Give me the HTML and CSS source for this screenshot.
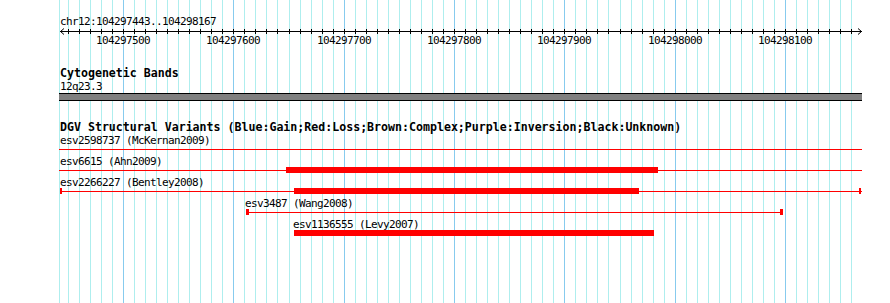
FILE: index.html
```html
<!DOCTYPE html>
<html lang="en">
<head>
    <meta charset="UTF-8">
    <title>chr12:104297443..104298167</title>
    <link rel="stylesheet" href="styles.css">
</head>
<body>
    <div class="browser">
        <!-- grade de fundo: linha a cada 10 pb, mais escura a cada 100 pb -->
        <svg class="grid" width="803" height="303" viewBox="0 0 803 303">
            <path class="minor" d="M0.5 0V303M9.5 0V303M20.5 0V303M31.5 0V303M42.5 0V303M53.5 0V303M75.5 0V303M86.5 0V303M97.5 0V303M108.5 0V303M119.5 0V303M130.5 0V303M141.5 0V303M152.5 0V303M163.5 0V303M185.5 0V303M196.5 0V303M207.5 0V303M218.5 0V303M230.5 0V303M241.5 0V303M252.5 0V303M263.5 0V303M274.5 0V303M296.5 0V303M307.5 0V303M318.5 0V303M329.5 0V303M340.5 0V303M351.5 0V303M362.5 0V303M373.5 0V303M384.5 0V303M406.5 0V303M417.5 0V303M428.5 0V303M439.5 0V303M450.5 0V303M461.5 0V303M472.5 0V303M483.5 0V303M494.5 0V303M516.5 0V303M527.5 0V303M538.5 0V303M549.5 0V303M561.5 0V303M572.5 0V303M583.5 0V303M594.5 0V303M605.5 0V303M627.5 0V303M638.5 0V303M649.5 0V303M660.5 0V303M671.5 0V303M682.5 0V303M693.5 0V303M704.5 0V303M715.5 0V303M737.5 0V303M748.5 0V303M759.5 0V303M770.5 0V303M781.5 0V303M792.5 0V303"/>
            <path class="major" d="M64.5 0V303M174.5 0V303M285.5 0V303M395.5 0V303M505.5 0V303M616.5 0V303M726.5 0V303"/>
        </svg>

        <!-- Régua -->
        <div class="track ruler">
            <div class="text range">chr12:104297443..104298167</div>
            <div class="axis">
                <svg width="803" height="6" viewBox="0 0 803 6">
                    <path class="axis-line" d="M1 3.5H803M5 0.5L1.5 3.5L5 6.5M799 0.5L802.5 3.5L799 6.5"/>
                    <path class="ticks" d="M9.5 1V6M20.5 1V6M31.5 1V6M42.5 1V6M53.5 1V6M64.5 1V6M75.5 1V6M86.5 1V6M97.5 1V6M108.5 1V6M119.5 1V6M130.5 1V6M141.5 1V6M152.5 1V6M163.5 1V6M174.5 1V6M185.5 1V6M196.5 1V6M207.5 1V6M218.5 1V6M230.5 1V6M241.5 1V6M252.5 1V6M263.5 1V6M274.5 1V6M285.5 1V6M296.5 1V6M307.5 1V6M318.5 1V6M329.5 1V6M340.5 1V6M351.5 1V6M362.5 1V6M373.5 1V6M384.5 1V6M395.5 1V6M406.5 1V6M417.5 1V6M428.5 1V6M439.5 1V6M450.5 1V6M461.5 1V6M472.5 1V6M483.5 1V6M494.5 1V6M505.5 1V6M516.5 1V6M527.5 1V6M538.5 1V6M549.5 1V6M561.5 1V6M572.5 1V6M583.5 1V6M594.5 1V6M605.5 1V6M616.5 1V6M627.5 1V6M638.5 1V6M649.5 1V6M660.5 1V6M671.5 1V6M682.5 1V6M693.5 1V6M704.5 1V6M715.5 1V6M726.5 1V6M737.5 1V6M748.5 1V6M759.5 1V6M770.5 1V6M781.5 1V6M792.5 1V6"/>
                </svg>
            </div>
            <div class="tick-labels">
                <span class="text tick-label" style="left: 64px">104297500</span>
                <span class="text tick-label" style="left: 174px">104297600</span>
                <span class="text tick-label" style="left: 285px">104297700</span>
                <span class="text tick-label" style="left: 395px">104297800</span>
                <span class="text tick-label" style="left: 505px">104297900</span>
                <span class="text tick-label" style="left: 616px">104298000</span>
                <span class="text tick-label" style="left: 726px">104298100</span>
            </div>
        </div>

        <!-- Bandas citogenéticas -->
        <div class="track cyto">
            <div class="track-title">Cytogenetic Bands</div>
            <div class="text band-name">12q23.3</div>
            <div class="band"></div>
        </div>

        <!-- Variantes estruturais -->
        <div class="track dgv">
            <div class="track-title">DGV Structural Variants (Blue:Gain;Red:Loss;Brown:Complex;Purple:Inversion;Black:Unknown)</div>

            <div class="feature-row">
                <span class="text feature-label" style="left: 1px">esv2598737 (McKernan2009)</span>
                <div class="span-line" style="left: 0; width: 803px"></div>
            </div>

            <div class="feature-row">
                <span class="text feature-label" style="left: 1px">esv6615 (Ahn2009)</span>
                <div class="span-line" style="left: 0; width: 803px"></div>
                <div class="block" style="left: 227px; width: 372px"></div>
            </div>

            <div class="feature-row">
                <span class="text feature-label" style="left: 1px">esv2266227 (Bentley2008)</span>
                <div class="span-line" style="left: 1px; width: 802px"></div>
                <div class="cap" style="left: 1px; width: 2px"></div>
                <div class="cap" style="left: 800px; width: 2px"></div>
                <div class="block" style="left: 235px; width: 345px"></div>
            </div>

            <div class="feature-row">
                <span class="text feature-label" style="left: 186px">esv3487 (Wang2008)</span>
                <div class="span-line" style="left: 187px; width: 537px"></div>
                <div class="cap" style="left: 187px"></div>
                <div class="cap" style="left: 721px"></div>
            </div>

            <div class="feature-row">
                <span class="text feature-label" style="left: 234px">esv1136555 (Levy2007)</span>
                <div class="block" style="left: 235px; width: 360px"></div>
            </div>
        </div>
    </div>
</body>
</html>
```

FILE: styles.css
```css
/* Layout principal */
body {
    margin: 0;
    width: 890px;
    height: 303px;
    overflow: hidden;
    background: #fff;
    color: #000;
    font-family: "DejaVu Sans Mono", "Liberation Mono", monospace;
}
.browser {
    position: relative;
    isolation: isolate;
    margin-left: 59px;
    width: 803px;
    height: 303px;
}
.grid {
    position: absolute;
    top: 0;
    left: 0;
    z-index: -1;
    shape-rendering: crispEdges;
}
.grid .minor {
    stroke: #aeeeee;
    stroke-width: 1;
}
.grid .major {
    stroke: #87cbee;
    stroke-width: 1;
}

/* Textos */
.text {
    font-size: 11px;
    letter-spacing: -0.62px;
    line-height: 13px;
    white-space: pre;
}
.track-title {
    font-size: 11.6px;
    font-weight: bold;
    line-height: 14px;
    padding-left: 1px;
    white-space: pre;
}

/* Régua */
.ruler {
    padding-top: 15px;
}
.range {
    padding-left: 1px;
}
.axis {
    height: 6px;
}
.axis svg {
    display: block;
    overflow: visible;
}
.axis-line, .ticks {
    fill: none;
    stroke: #000;
    stroke-width: 1;
}
.tick-labels {
    position: relative;
    height: 13px;
}
.tick-label {
    position: absolute;
    top: 0;
    transform: translateX(-50%);
}

/* Bandas */
.cyto {
    margin-top: 19px;
}
.band-name {
    padding-left: 1px;
}
.band {
    height: 6px;
    background: #808080;
    border-top: 1px solid #000;
    border-bottom: 1px solid #000;
}

/* Variantes */
.dgv {
    margin-top: 19px;
}
.feature-row {
    position: relative;
    height: 21px;
}
.feature-label {
    position: absolute;
    top: 0;
}
.span-line {
    position: absolute;
    top: 15px;
    height: 1px;
    background: #f00;
}
.block {
    position: absolute;
    top: 12px;
    height: 6px;
    background: #f00;
}
.cap {
    position: absolute;
    top: 12px;
    width: 3px;
    height: 6px;
    background: #f00;
}
```
